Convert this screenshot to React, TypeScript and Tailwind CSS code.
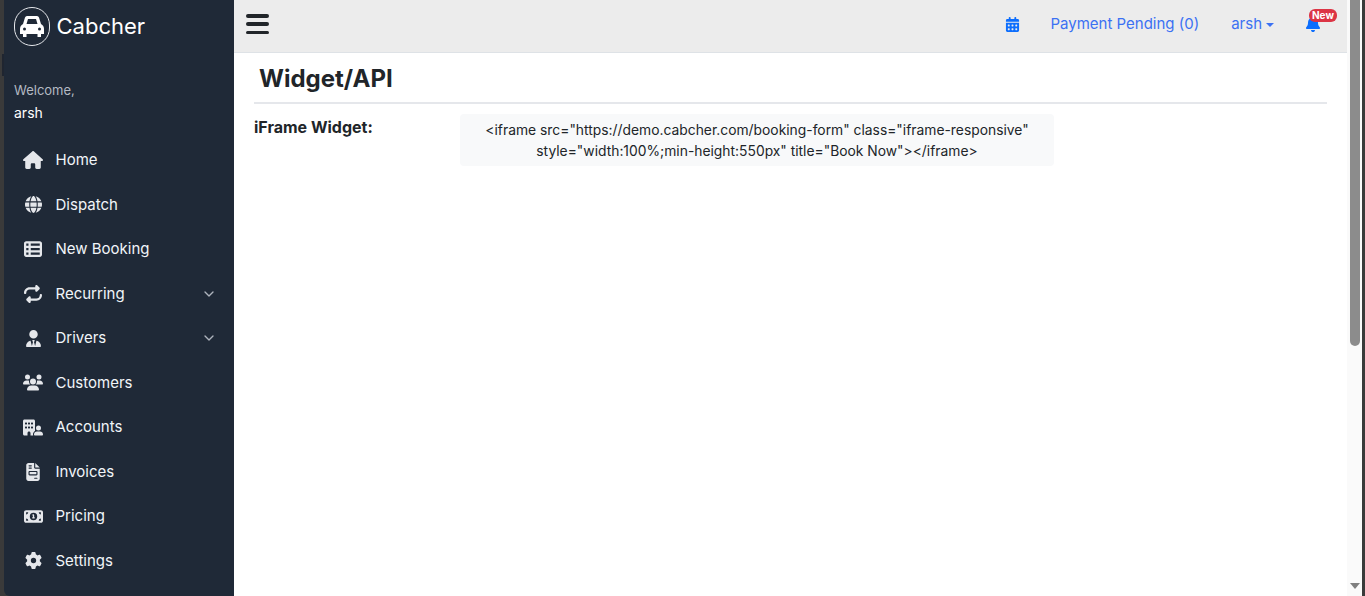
import { FaHouse, FaGlobe, FaTableList, FaRepeat, FaUserTie, FaUsers, FaBuildingUser, FaFileInvoice, FaMoneyBill1, FaGear, FaCalendarDays, FaBell } from 'react-icons/fa6';
import { ChevronDown } from 'lucide-react';

const menu = [
  { label: 'Home', icon: FaHouse, size: 20 },
  { label: 'Dispatch', icon: FaGlobe, size: 17 },
  { label: 'New Booking', icon: FaTableList, size: 18 },
  { label: 'Recurring', icon: FaRepeat, size: 18 },
  { label: 'Drivers', icon: FaUserTie, size: 17 },
  { label: 'Customers', icon: FaUsers, size: 21 },
  { label: 'Accounts', icon: FaBuildingUser, size: 21 },
  { label: 'Invoices', icon: FaFileInvoice, size: 18 },
  { label: 'Pricing', icon: FaMoneyBill1, size: 19 },
  { label: 'Settings', icon: FaGear, size: 17 },
];

function CarLogo() {
  return (
    <svg viewBox="0 0 24 23" className="h-[23px] w-[24px] fill-white">
      <path
        fillRule="evenodd"
        d="M7 1H17Q18.5 1 19 2.5L21 9Q24 10.5 24 14V19H21V22H17.5V19H6.5V22H3V19H0V14Q0 10.5 3 9L5 2.5Q5.5 1 7 1ZM8 4H16L17.5 9H6.5ZM4.5 12.5A1.5 1.5 0 1 0 4.5 15.5A1.5 1.5 0 1 0 4.5 12.5ZM19.5 12.5A1.5 1.5 0 1 0 19.5 15.5A1.5 1.5 0 1 0 19.5 12.5Z"
      />
    </svg>
  );
}

export default function App() {
  return (
    <div className="flex h-[596px] w-[1365px] overflow-hidden bg-[#3a3a3a] font-['Inter',sans-serif] text-[15px] text-[#212529]">
      {/* Sidebar */}
      <aside className="relative ml-[4px] h-full w-[230px] shrink-0 rounded-bl-[6px] bg-[#1f2937] text-[#f1f5f9]">
        <span className="absolute left-[-2px] top-[54px] h-[22px] w-[2px] bg-[#1f2530]" />
        <div className="flex h-[53px] items-center pl-[10px]">
          <div className="flex h-[39px] w-[36px] items-center justify-center rounded-full border border-[#e5e7eb]">
            <CarLogo />
          </div>
          <span className="mb-[2px] ml-[6.5px] text-[22px] leading-none text-white">Cabcher</span>
        </div>
        <div className="pl-[10px] pt-[27px]">
          <div className="text-[13px] leading-[20px] text-[#b4bac3]">Welcome,</div>
          <div className="mt-[3px] text-[14px] leading-[20px] text-white">arsh</div>
        </div>
        <nav className="mt-[15px]">
          {menu.map((item) => (
            <div key={item.label} className="flex h-[44.5px] items-center pl-[19px] pr-[17px]">
              <span className="flex w-[20px] justify-center">
                <item.icon size={item.size} className="text-[#e5e7eb]" />
              </span>
              <span className="ml-[12.5px] flex-1 text-[15px]">{item.label}</span>
              {item.label === 'Recurring' || item.label === 'Drivers' ? (
                <ChevronDown size={16} strokeWidth={2} className="text-[#aeb4bd]" />
              ) : null}
            </div>
          ))}
        </nav>
      </aside>

      {/* Main */}
      <div className="flex h-full w-[1113px] shrink-0 flex-col bg-white">
        <header className="flex h-[53px] shrink-0 items-center border-b border-[#dee2e6] bg-[#ececec] pb-[4px] pl-[12px] pr-[25px] text-[#3b71f3]">
          <div className="flex h-[20px] w-[23px] flex-col justify-between">
            <span className="h-[3.5px] rounded-full bg-[#212529]" />
            <span className="h-[3.5px] rounded-full bg-[#212529]" />
            <span className="h-[3.5px] rounded-full bg-[#212529]" />
          </div>
          <div className="ml-auto flex items-center">
            <FaCalendarDays size={15} className="text-[#0d6efd]" />
            <span className="ml-[30px]">Payment Pending (0)</span>
            <span className="ml-[32px]">arsh</span>
            <span className="ml-[4px] mt-[1px] h-0 w-0 border-x-[4.5px] border-t-[4.5px] border-x-transparent border-t-[#3b71f3]" />
            <span className="relative ml-[31px] mr-[1px]">
              <FaBell size={16} className="text-[#0d6efd]" />
              <span className="absolute left-[4px] top-[-7px] rounded-[6px] bg-[#dc3545] px-[3px] text-[10px] font-bold leading-[13px] text-white">New</span>
            </span>
          </div>
        </header>
        <main className="flex-1 pl-[20px] pr-[20px]">
          <h1 className="h-[51px] border-b-2 border-[#e5e7eb] pl-[5px] text-[24px] font-bold leading-[51px]">Widget/API</h1>
          <div className="mt-[10px] flex items-start">
            <div className="w-[206px] pt-[3px] text-[16px] font-bold leading-[20px]">iFrame Widget:</div>
            <div className="w-[594px] rounded-[4px] bg-[#f8f9fa] pb-[4px] pt-[6px] text-center text-[13.85px] leading-[21px]">
              &lt;iframe src="https://demo.cabcher.com/booking-form" class="iframe-responsive"<br />
              style="width:100%;min-height:550px" title="Book Now"&gt;&lt;/iframe&gt;
            </div>
          </div>
        </main>
      </div>

      {/* Scrollbar */}
      <div className="flex h-full w-[15px] shrink-0 flex-col items-center bg-[#fafafa]">
        <div className="h-[346px] w-[10px] rounded-b-[5px] bg-[#8c8c8c]" />
        <div className="mb-[7px] mt-auto h-0 w-0 border-x-[5px] border-t-[6px] border-x-transparent border-t-[#7f7f7f]" />
      </div>
    </div>
  );
}
